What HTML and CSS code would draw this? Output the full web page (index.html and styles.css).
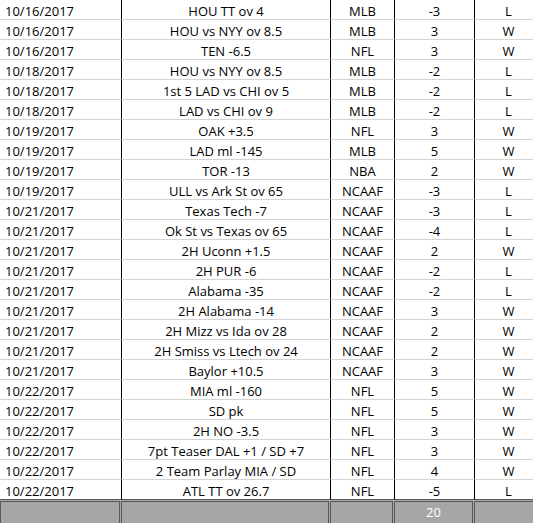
FILE: index.html
```html
<!DOCTYPE html>
<html>
<head>
<meta charset="utf-8">
<link rel="stylesheet" href="styles.css">
</head>
<body>
<div class="sheet">
  <div class="row"><div class="c date">10/16/2017</div><div class="c bet">HOU TT ov 4</div><div class="c lg">MLB</div><div class="c u">-3</div><div class="c r">L</div></div>
  <div class="row"><div class="c date">10/16/2017</div><div class="c bet">HOU vs NYY ov 8.5</div><div class="c lg">MLB</div><div class="c u">3</div><div class="c r">W</div></div>
  <div class="row"><div class="c date">10/16/2017</div><div class="c bet">TEN -6.5</div><div class="c lg">NFL</div><div class="c u">3</div><div class="c r">W</div></div>
  <div class="row"><div class="c date">10/18/2017</div><div class="c bet">HOU vs NYY ov 8.5</div><div class="c lg">MLB</div><div class="c u">-2</div><div class="c r">L</div></div>
  <div class="row"><div class="c date">10/18/2017</div><div class="c bet">1st 5 LAD vs CHI ov 5</div><div class="c lg">MLB</div><div class="c u">-2</div><div class="c r">L</div></div>
  <div class="row"><div class="c date">10/18/2017</div><div class="c bet">LAD vs CHI ov 9</div><div class="c lg">MLB</div><div class="c u">-2</div><div class="c r">L</div></div>
  <div class="row"><div class="c date">10/19/2017</div><div class="c bet">OAK +3.5</div><div class="c lg">NFL</div><div class="c u">3</div><div class="c r">W</div></div>
  <div class="row"><div class="c date">10/19/2017</div><div class="c bet">LAD ml -145</div><div class="c lg">MLB</div><div class="c u">5</div><div class="c r">W</div></div>
  <div class="row"><div class="c date">10/19/2017</div><div class="c bet">TOR -13</div><div class="c lg">NBA</div><div class="c u">2</div><div class="c r">W</div></div>
  <div class="row"><div class="c date">10/19/2017</div><div class="c bet">ULL vs Ark St ov 65</div><div class="c lg">NCAAF</div><div class="c u">-3</div><div class="c r">L</div></div>
  <div class="row"><div class="c date">10/21/2017</div><div class="c bet">Texas Tech -7</div><div class="c lg">NCAAF</div><div class="c u">-3</div><div class="c r">L</div></div>
  <div class="row"><div class="c date">10/21/2017</div><div class="c bet">Ok St vs Texas ov 65</div><div class="c lg">NCAAF</div><div class="c u">-4</div><div class="c r">L</div></div>
  <div class="row"><div class="c date">10/21/2017</div><div class="c bet">2H Uconn +1.5</div><div class="c lg">NCAAF</div><div class="c u">2</div><div class="c r">W</div></div>
  <div class="row"><div class="c date">10/21/2017</div><div class="c bet">2H PUR -6</div><div class="c lg">NCAAF</div><div class="c u">-2</div><div class="c r">L</div></div>
  <div class="row"><div class="c date">10/21/2017</div><div class="c bet">Alabama -35</div><div class="c lg">NCAAF</div><div class="c u">-2</div><div class="c r">L</div></div>
  <div class="row"><div class="c date">10/21/2017</div><div class="c bet">2H Alabama -14</div><div class="c lg">NCAAF</div><div class="c u">3</div><div class="c r">W</div></div>
  <div class="row"><div class="c date">10/21/2017</div><div class="c bet">2H Mizz vs Ida ov 28</div><div class="c lg">NCAAF</div><div class="c u">2</div><div class="c r">W</div></div>
  <div class="row"><div class="c date">10/21/2017</div><div class="c bet">2H Smiss vs Ltech ov 24</div><div class="c lg">NCAAF</div><div class="c u">2</div><div class="c r">W</div></div>
  <div class="row"><div class="c date">10/21/2017</div><div class="c bet">Baylor +10.5</div><div class="c lg">NCAAF</div><div class="c u">3</div><div class="c r">W</div></div>
  <div class="row"><div class="c date">10/22/2017</div><div class="c bet">MIA ml -160</div><div class="c lg">NFL</div><div class="c u">5</div><div class="c r">W</div></div>
  <div class="row"><div class="c date">10/22/2017</div><div class="c bet">SD pk</div><div class="c lg">NFL</div><div class="c u">5</div><div class="c r">W</div></div>
  <div class="row"><div class="c date">10/22/2017</div><div class="c bet">2H NO -3.5</div><div class="c lg">NFL</div><div class="c u">3</div><div class="c r">W</div></div>
  <div class="row"><div class="c date">10/22/2017</div><div class="c bet">7pt Teaser DAL +1 / SD +7</div><div class="c lg">NFL</div><div class="c u">3</div><div class="c r">W</div></div>
  <div class="row"><div class="c date">10/22/2017</div><div class="c bet">2 Team Parlay MIA / SD</div><div class="c lg">NFL</div><div class="c u">4</div><div class="c r">W</div></div>
  <div class="row last"><div class="c date">10/22/2017</div><div class="c bet">ATL TT ov 26.7</div><div class="c lg">NFL</div><div class="c u">-5</div><div class="c r">L</div></div>
  <div class="total">
    <div class="t t1"></div><div class="t t2"></div><div class="t t3"></div><div class="t t4">20</div><div class="t t5"></div>
  </div>
</div>
</body>
</html>
```
FILE: styles.css
```css
html, body {
  margin: 0;
  padding: 0;
  background: #fff;
  overflow: hidden;
}
.sheet {
  width: 533px;
  overflow: hidden;
  font-family: "Open Sans", "Liberation Sans", sans-serif;
  font-size: 13px;
  color: #000;
}
.row, .total {
  display: grid;
  grid-template-columns: 121px 209px 64px 80px 59px;
}
.row {
  height: 20px;
}
.c {
  box-sizing: content-box;
  height: 17px;
  padding-top: 2px;
  line-height: 18px;
  border-bottom: 1px solid #d4d4d4;
  white-space: nowrap;
  overflow: hidden;
  text-align: center;
}
.date {
  text-align: left;
  padding-left: 5px;
}
.bet, .lg, .u, .r {
  border-left: 1px solid #000;
}
.r {
  padding-left: 9px;
}
.row.last .c {
  border-bottom-color: #595959;
}
.total {
  height: 24px;
  background: #a6a6a6;
  padding-top: 1px;
  box-sizing: border-box;
}
.t {
  border: 1px solid #595959;
  margin-right: 1px;
  color: #fff;
  text-align: center;
  line-height: 21px;
  height: 23px;
  box-sizing: border-box;
}
.t5 {
  margin-right: 0;
  border-right: 0;
}
```
